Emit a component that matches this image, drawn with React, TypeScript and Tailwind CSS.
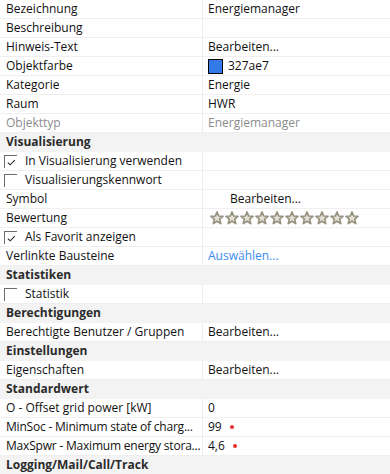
import React from "react";

type Row =
  | { kind: "section"; label: string }
  | {
      kind: "prop";
      label: string;
      value?: React.ReactNode;
      check?: boolean | null;
      muted?: boolean;
      tight?: boolean;
    };

function Checkbox({ checked }: { checked: boolean }) {
  return (
    <span className="relative ml-[4px] mr-[8px] inline-block h-[13px] w-[13px] shrink-0 border-l border-t border-[#6d6d6d] bg-white">
      {checked ? (
        <svg viewBox="0 0 12 12" className="absolute left-[1px] top-[1px] h-[11px] w-[11px]">
          <path d="M2 6.2 L4.6 8.6 L9.6 3.4" fill="none" stroke="#222" strokeWidth="1.1" />
        </svg>
      ) : null}
    </span>
  );
}

function Star() {
  return (
    <svg viewBox="0 0 14 14" className="h-[14px] w-[14px] shrink-0">
      <path
        d="M7 1 L8.7 5 L13 5.3 L9.7 8.1 L10.7 12.6 L7 10.2 L3.3 12.6 L4.3 8.1 L1 5.3 L5.3 5 Z"
        fill="#e2dfd4"
        stroke="#979180"
        strokeWidth="1.7"
        strokeLinejoin="round"
      />
    </svg>
  );
}

function Dot() {
  return <span className="ml-[8px] inline-block h-[4px] w-[4px] rounded-full bg-[#e8302c]" />;
}

const rows: Row[] = [
  { kind: "prop", label: "Bezeichnung", value: "Energiemanager" },
  { kind: "prop", label: "Beschreibung" },
  { kind: "prop", label: "Hinweis-Text", value: "Bearbeiten..." },
  {
    kind: "prop",
    label: "Objektfarbe",
    value: (
      <span className="flex items-center">
        <span className="mr-[5px] inline-block h-[15px] w-[15px] border border-black bg-[#327ae7]" />
        327ae7
      </span>
    ),
  },
  { kind: "prop", label: "Kategorie", value: "Energie" },
  { kind: "prop", label: "Raum", value: "HWR" },
  { kind: "prop", label: "Objekttyp", value: "Energiemanager", muted: true },
  { kind: "section", label: "Visualisierung" },
  { kind: "prop", label: "In Visualisierung verwenden", check: true },
  { kind: "prop", label: "Visualisierungskennwort", check: false },
  { kind: "prop", label: "Symbol", value: <span className="pl-[22px]">Bearbeiten...</span> },
  {
    kind: "prop",
    label: "Bewertung",
    value: (
      <span className="flex gap-[1px] pl-[2px]">
        {Array.from({ length: 10 }).map((_, i) => (
          <Star key={i} />
        ))}
      </span>
    ),
  },
  { kind: "prop", label: "Als Favorit anzeigen", check: true },
  {
    kind: "prop",
    label: "Verlinkte Bausteine",
    value: <span className="text-[#3d8bf2]">Auswählen...</span>,
  },
  { kind: "section", label: "Statistiken" },
  { kind: "prop", label: "Statistik", check: false },
  { kind: "section", label: "Berechtigungen" },
  { kind: "prop", label: "Berechtigte Benutzer / Gruppen", value: "Bearbeiten..." },
  { kind: "section", label: "Einstellungen" },
  { kind: "prop", label: "Eigenschaften", value: "Bearbeiten..." },
  { kind: "section", label: "Standardwert" },
  { kind: "prop", label: "O - Offset grid power [kW]", value: "0" },
  {
    kind: "prop",
    label: "MinSoc - Minimum state of charg...",
    tight: true,
    value: (
      <span className="flex items-center">
        99
        <Dot />
      </span>
    ),
  },
  {
    kind: "prop",
    label: "MaxSpwr - Maximum energy stora...",
    tight: true,
    value: (
      <span className="flex items-center">
        4,6
        <Dot />
      </span>
    ),
  },
  { kind: "section", label: "Logging/Mail/Call/Track" },
];

export default function App() {
  return (
    <div
      className="h-[474px] w-[390px] overflow-hidden bg-white text-[12px] text-[#111]"
      style={{ fontFamily: '"Open Sans", "Noto Sans", sans-serif' }}
    >
      {rows.map((r, i) =>
        r.kind === "section" ? (
          <div
            key={i}
            className="flex h-[19px] items-center border-b border-[#f3f3f3] bg-[#f3f3f3] pl-[6px] font-bold text-[#2b2b2b]"
          >
            {r.label}
          </div>
        ) : (
          <div key={i} className="flex h-[19px] border-b border-[#efefef]">
            <div
              className={
                "flex w-[203px] shrink-0 items-center whitespace-nowrap border-r border-[#ececec] " +
                (r.check === undefined || r.check === null ? "pl-[6px]" : "") +
                (r.muted ? " text-[#8c8c8c]" : "") +
                (r.tight ? " tracking-[-0.2px]" : "")
              }
            >
              {r.check !== undefined && r.check !== null ? <Checkbox checked={r.check} /> : null}
              {r.label}
            </div>
            <div
              className={
                "flex flex-1 items-center whitespace-nowrap pl-[5px] " + (r.muted ? "text-[#8c8c8c]" : "")
              }
            >
              {r.value}
            </div>
          </div>
        )
      )}
    </div>
  );
}
